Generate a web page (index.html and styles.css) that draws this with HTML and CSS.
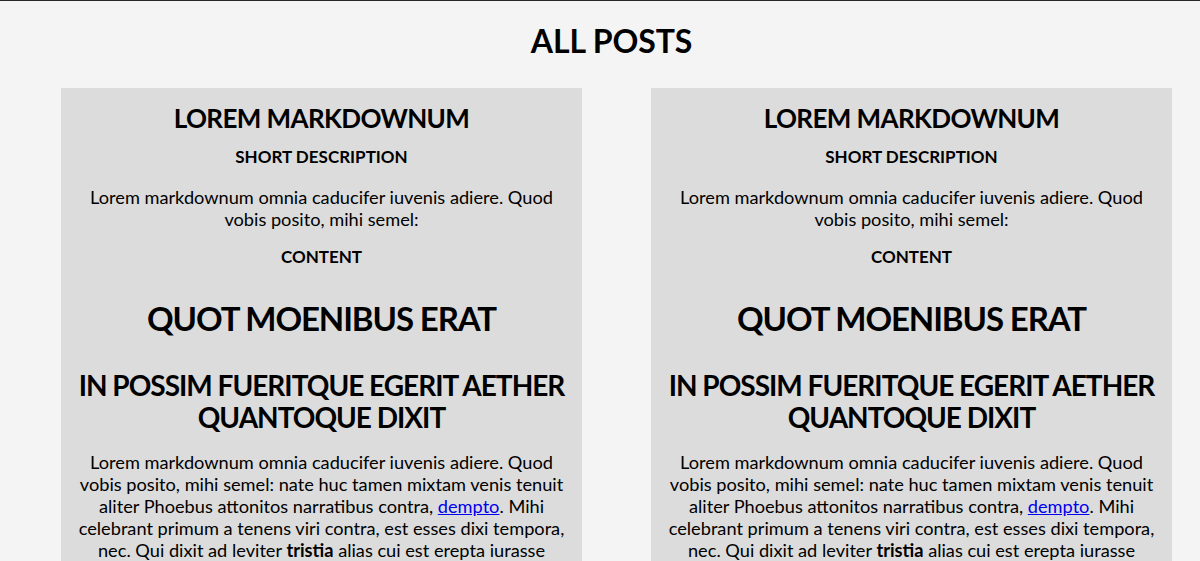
FILE: index.html
```html
<!DOCTYPE html>
<html lang="en">
<head>
<meta charset="utf-8">
<title>All posts</title>
<link rel="stylesheet" href="styles.css">
</head>
<body>
<main class="page">
  <h1 class="page-title">ALL POSTS</h1>
  <div class="posts">
    <article class="card">
      <h2 class="card-title">LOREM MARKDOWNUM</h2>
      <h3 class="label">SHORT DESCRIPTION</h3>
      <p class="text">Lorem markdownum omnia caducifer iuvenis adiere. Quod vobis posito, mihi semel:</p>
      <h3 class="label label-content">CONTENT</h3>
      <h1 class="md-h1">QUOT MOENIBUS ERAT</h1>
      <h2 class="md-h2">IN POSSIM FUERITQUE EGERIT AETHER QUANTOQUE DIXIT</h2>
      <p class="text body">Lorem markdownum omnia caducifer iuvenis adiere. Quod vobis posito, mihi semel: nate huc tamen mixtam venis tenuit aliter Phoebus attonitos narratibus contra, <a href="#">dempto</a>. Mihi celebrant primum a tenens viri contra, est esses dixi tempora, nec. Qui dixit ad leviter <strong>tristia</strong> alias cui est erepta iurasse</p>
    </article>
    <article class="card">
      <h2 class="card-title">LOREM MARKDOWNUM</h2>
      <h3 class="label">SHORT DESCRIPTION</h3>
      <p class="text">Lorem markdownum omnia caducifer iuvenis adiere. Quod vobis posito, mihi semel:</p>
      <h3 class="label label-content">CONTENT</h3>
      <h1 class="md-h1">QUOT MOENIBUS ERAT</h1>
      <h2 class="md-h2">IN POSSIM FUERITQUE EGERIT AETHER QUANTOQUE DIXIT</h2>
      <p class="text body">Lorem markdownum omnia caducifer iuvenis adiere. Quod vobis posito, mihi semel: nate huc tamen mixtam venis tenuit aliter Phoebus attonitos narratibus contra, <a href="#">dempto</a>. Mihi celebrant primum a tenens viri contra, est esses dixi tempora, nec. Qui dixit ad leviter <strong>tristia</strong> alias cui est erepta iurasse</p>
    </article>
  </div>
</main>
</body>
</html>
```
FILE: styles.css
```css
html, body {
  margin: 0;
  padding: 0;
}
body {
  background: #f4f4f4;
  border-top: 1px solid #262626;
  color: #000;
  font-family: "Lato", "Liberation Sans", sans-serif;
}
.page {
  padding: 20px 28px 0 61px;
}
.page-title {
  margin: 0 10px 0 0;
  font-size: 32px;
  line-height: 40px;
  font-weight: 700;
  text-align: center;
  letter-spacing: -0.1px;
}
.posts {
  margin-top: 27px;
  display: grid;
  grid-template-columns: 521px 521px;
  column-gap: 69px;
}
.card {
  background: #dcdcdc;
  padding: 14px 15px 40px;
  text-align: center;
}
.card h1, .card h2, .card h3, .card p {
  margin: 0;
}
.card-title {
  font-size: 26px;
  line-height: 32px;
  font-weight: 700;
  letter-spacing: -0.6px;
}
.label {
  font-size: 17px;
  line-height: 22px;
  font-weight: 700;
  margin-top: 12px !important;
}
.text {
  font-size: 18.2px;
  line-height: 22px;
  margin-top: 18px !important;
}
.label-content {
  margin-top: 16px !important;
}
.md-h1 {
  font-size: 33px;
  line-height: 42px;
  font-weight: 700;
  letter-spacing: -1.1px;
  margin-top: 29px !important;
}
.md-h2 {
  font-size: 28px;
  line-height: 32px;
  font-weight: 700;
  letter-spacing: -1px;
  margin-top: 30px !important;
}
.body {
  margin-top: 18px !important;
}
.text a {
  color: #0000ee;
}
.text strong {
  font-weight: 700;
}
```
